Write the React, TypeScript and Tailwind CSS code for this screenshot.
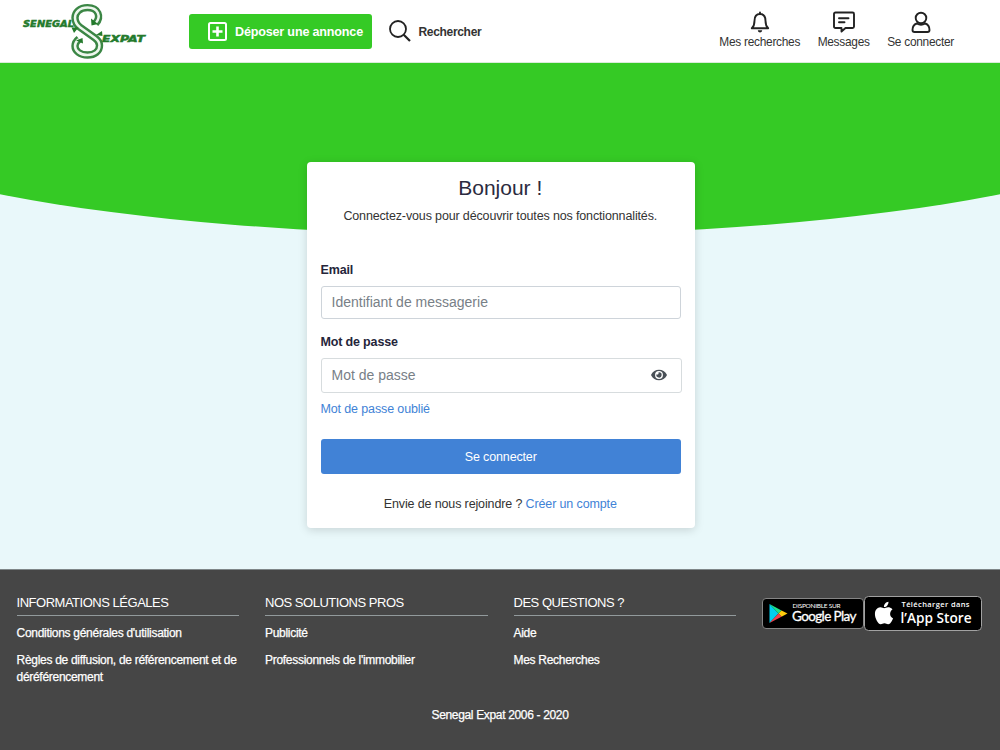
import React from "react";

function Logo() {
  const ribbon =
    "M95.500 23.500C101.500 17 98.500 7.600 87.500 7.600C79.500 7.600 75 12.500 75 17.800C75 22 77 25 80 27.300L95 38C98.500 40.500 99.500 42.500 99.500 45.500C99.500 51 95 55 87.500 55C80 55 75 51 75 46C75 43 76.500 41 79 39";
  return (
    <svg className="block h-[58px] w-[130px]" viewBox="20 2 130 58" fill="none">
      <path d={ribbon} stroke="#3b8645" strokeWidth="7.400" strokeLinejoin="round" />
      <path d={ribbon} stroke="#eef7ee" strokeWidth="2.500" strokeLinejoin="round" />
      <path d="M91 18.500L91.500 25.500L98 24ZM83 43.500L82.500 38L76 40.500ZM71.500 27.500L78.500 27.500L74 33ZM96 35L102 31L102.500 36Z" fill="#247a2c" />
      <text x="23" y="27.300" textLength="51" lengthAdjust="spacingAndGlyphs" fontFamily="DejaVu Sans" fontWeight="700" fontStyle="italic" fontSize="9.500" fill="#247a2c" stroke="#247a2c" strokeWidth=".5">SENEGAL</text>
      <text x="102" y="42" textLength="43" lengthAdjust="spacingAndGlyphs" fontFamily="DejaVu Sans" fontWeight="700" fontStyle="italic" fontSize="9.500" fill="#247a2c" stroke="#247a2c" strokeWidth=".5">EXPAT</text>
    </svg>
  );
}

function NavItem({ label, children }: { label: string; children: React.ReactNode }) {
  return (
    <a className="flex flex-col items-center whitespace-nowrap leading-[14px] text-[#333]">
      <svg viewBox="0 0 22 22" className="mb-[2px] h-[22px] w-[22px]" fill="none" stroke="#222" strokeWidth="1.900" strokeLinecap="round" strokeLinejoin="round">
        {children}
      </svg>
      <span className="text-[11.900px] tracking-[-0.270px]">{label}</span>
    </a>
  );
}

function FooterColumn({ title, links }: { title: string; links: string[] }) {
  return (
    <div className="w-[222.500px] shrink-0">
      <h3 className="border-b border-[#929a9c] pb-[4px] text-[13px] leading-[17px] tracking-[-0.480px] whitespace-nowrap">{title}</h3>
      <ul className="mt-[9px] flex flex-col gap-[10px] text-[12px] leading-[17px] tracking-[-0.290px] [-webkit-text-stroke:0.25px_white]">
        {links.map((l) => (
          <li key={l}>{l}</li>
        ))}
      </ul>
    </div>
  );
}

function GooglePlay() {
  return (
    <svg className="h-[31px] w-[102px]" viewBox="0 0 102 31">
      <rect x=".5" y=".5" width="101" height="30" rx="3.500" fill="#000" stroke="#858585" />
      <path d="M7.500 6L16.500 15.500L7.500 25Z" fill="#00cff0" />
      <path d="M7.500 6L19.500 12.500L16.500 15.500Z" fill="#1be08a" />
      <path d="M19.500 12.500L25.500 15.500L19.500 18.700L16.500 15.500Z" fill="#ffcb0c" />
      <path d="M7.500 25L16.500 15.500L19.500 18.700Z" fill="#f33f4b" />
      <text x="30.500" y="10" textLength="48" fontFamily="Lato" fontSize="6.500" fill="#fff">DISPONIBLE SUR</text>
      <text x="30" y="22.700" textLength="64.500" fontFamily="Lato" fontSize="13.500" fill="#fff" stroke="#fff" strokeWidth=".3">Google Play</text>
    </svg>
  );
}

function AppStore() {
  return (
    <svg className="h-[35px] w-[118px]" viewBox="0 0 118 35">
      <rect x=".5" y=".5" width="117" height="34" rx="4" fill="#000" stroke="#a2a2a2" />
      <path
        fill="#fff"
        d="M18.710 19.500c-.83 1.240-1.710 2.450-3.050 2.470-1.340.03-1.770-.79-3.290-.79-1.530 0-2 .77-3.270.82-1.310.05-2.300-1.320-3.140-2.530C4.250 17 2.940 12.450 4.700 9.390c.87-1.520 2.430-2.480 4.120-2.510 1.280-.02 2.500.87 3.290.87.780 0 2.260-1.070 3.810-.91.650.03 2.470.26 3.640 1.980-.09.060-2.170 1.280-2.150 3.810.03 3.020 2.650 4.030 2.680 4.040-.03.070-.42 1.440-1.380 2.830M13 3.500c.73-.83 1.940-1.460 2.940-1.500.13 1.170-.34 2.350-1.040 3.190-.69.850-1.830 1.510-2.950 1.420-.15-1.150.41-2.350 1.050-3.110z"
        transform="translate(6.600 3.600) scale(1.120)"
      />
      <text x="37.500" y="11" textLength="68" fontFamily="Open Sans" fontWeight="600" fontSize="7.500" fill="#fff">Télécharger dans</text>
      <text x="36.500" y="27.200" textLength="71" lengthAdjust="spacingAndGlyphs" fontFamily="Open Sans" fontWeight="600" fontSize="15" fill="#fff">l’App Store</text>
    </svg>
  );
}

export default function App() {
  return (
    <div className="flex h-[750px] w-full flex-col overflow-hidden bg-[#e9f8fa] font-['Liberation_Sans',Arial,sans-serif] text-[#333]">
      <header className="flex h-[63px] shrink-0 items-start border-b border-[#d9ecd9] bg-white pl-[20px] pr-[46px]">
        <div className="mt-[2px] w-[169px]">
          <Logo />
        </div>
        <button className="mt-[14px] flex h-[35px] w-[182.500px] items-center rounded-[3px] bg-[#35ca25] pl-[19px] text-[12.600px] tracking-[-0.190px] font-bold text-white">
          <svg viewBox="0 0 19 19" className="mr-[8px] h-[19px] w-[19px] shrink-0" fill="none" stroke="#fff" strokeWidth="2">
            <rect x="1" y="1" width="17" height="17" rx="1.500" />
            <path d="M9.500 4.500V14.500M4.500 9.500H14.500" strokeWidth="2.600" />
          </svg>
          <span className="whitespace-nowrap pt-[1px]">Déposer une annonce</span>
        </button>
        <a className="ml-[17px] mt-[19px] flex h-[24px] items-center text-[12px] tracking-[-0.320px] font-bold">
          <svg viewBox="0 0 22 22" className="mr-[8px] h-[22px] w-[22px]" fill="none" stroke="#222" strokeWidth="1.800">
            <circle cx="9" cy="9" r="8" />
            <path d="M14.700 14.700L21 21" strokeWidth="2.200" />
          </svg>
          <span className="mt-[1px]">Rechercher</span>
        </a>
        <nav className="ml-auto mt-[11px] flex gap-[17.500px]">
          <NavItem label="Mes recherches">
            <path d="M11 1.500V3M2.800 17.300H19.200C17.300 15.600 16.500 14 16.500 9.800C16.500 5.500 14.500 3 11 3C7.500 3 5.500 5.500 5.500 9.800C5.500 14 4.700 15.600 2.800 17.300Z" />
            <path d="M8.800 19.300H13.200C13 20.900 12 21.500 11 21.500C10 21.500 9 20.900 8.800 19.300Z" fill="#222" stroke="none" />
          </NavItem>
          <NavItem label="Messages">
            <path d="M2.500 1.500H19.500Q21 1.500 21 3V15.500Q21 17 19.500 17H12.500L8.500 20.500V17H2.500Q1 17 1 15.500V3Q1 1.500 2.500 1.500ZM6 7.300H15.500M6 11.300H11.500" />
          </NavItem>
          <NavItem label="Se connecter">
            <circle cx="11" cy="7" r="5.300" />
            <path d="M6.800 12.500C3.800 13.500 2.500 16 2.500 19Q2.500 21 4.500 21H17.500Q19.500 21 19.500 19C19.500 16 18.200 13.500 15.200 12.500Q11 15 6.800 12.500Z" />
          </NavItem>
        </nav>
      </header>

      <main className="relative flex h-[506px] shrink-0 justify-center overflow-hidden pl-[2px]">
        <div className="absolute -left-[20%] top-0 h-[172.300px] w-[140%] bg-[#35ca25] [border-radius:0_0_700px_700px/0_0_136px_136px]" />
        <section className="relative mt-[99px] flex h-[366px] w-[388px] flex-col rounded-[4px] bg-white pl-[13.500px] pr-[14px] shadow-[0_2px_10px_rgba(0,0,0,0.15)]">
          <h1 className="mt-[13px] pr-[1px] text-center text-[21px] leading-[26px] text-[#2b2b40]">Bonjour !</h1>
          <p className="mt-[7px] pr-[1px] text-center text-[12.500px] leading-[16px] tracking-[-0.140px] whitespace-nowrap">Connectez-vous pour découvrir toutes nos fonctionnalités.</p>
          <label className="mt-[38px] text-[12.500px] leading-[16px] tracking-[-0.160px] font-bold text-[#25253a]">Email</label>
          <input className="mt-[8px] h-[33px] w-[360px] shrink-0 rounded-[3px] border border-[#ced4da] px-[10px] pb-[2px] text-[14px] placeholder:text-[#788087]" placeholder="Identifiant de messagerie" />
          <label className="mt-[15px] text-[12.500px] leading-[16px] tracking-[-0.160px] font-bold text-[#25253a]">Mot de passe</label>
          <div className="mt-[8px] flex h-[35px] w-[361px] shrink-0 items-center rounded-[3px] border border-[#d7dcde] pl-[10px] pr-[14px]">
            <input className="min-w-0 flex-1 text-[14px] placeholder:text-[#788087]" placeholder="Mot de passe" />
            <svg viewBox="0 0 576 512" className="mb-[1px] h-[14px] w-[16px]" fill="#495057">
              <path d="M572.520 241.400C518.290 135.590 410.930 64 288 64S57.680 135.640 3.480 241.410a32.350 32.350 0 0 0 0 29.190C57.710 376.410 165.070 448 288 448s230.320-71.640 284.520-177.410a32.350 32.350 0 0 0 0-29.190zM288 400a144 144 0 1 1 144-144 143.930 143.930 0 0 1-144 144zm0-240a95.310 95.310 0 0 0-25.310 3.790 47.850 47.850 0 0 1-66.900 66.900A95.780 95.780 0 1 0 288 160z" />
            </svg>
          </div>
          <a className="mt-[8px] text-[12.500px] leading-[16px] tracking-[-0.130px] text-[#4182d6]">Mot de passe oublié</a>
          <button className="mt-[22px] h-[35px] shrink-0 rounded-[3px] bg-[#4182d6] pt-[1px] text-[12.500px] tracking-[-0.150px] text-white">Se connecter</button>
          <p className="mt-[22px] pr-[1px] text-center text-[12.500px] leading-[16px] tracking-[-0.130px]">
            Envie de nous rejoindre ? <a className="text-[#4182d6]">Créer un compte</a>
          </p>
        </section>
      </main>

      <footer className="flex flex-1 flex-col border-t border-[#7f8788] bg-[#464646] text-white">
        <div className="flex h-[137px] gap-[26px] pl-[16.500px] pt-[24px]">
          <FooterColumn title="INFORMATIONS LÉGALES" links={["Conditions générales d'utilisation", "Règles de diffusion, de référencement et de déréférencement"]} />
          <FooterColumn title="NOS SOLUTIONS PROS" links={["Publicité", "Professionnels de l'immobilier"]} />
          <FooterColumn title="DES QUESTIONS ?" links={["Aide", "Mes Recherches"]} />
          <div className="mt-[2px] flex h-[35px] items-center">
            <GooglePlay />
            <AppStore />
          </div>
        </div>
        <p className="text-center text-[12px] leading-[16px] tracking-[-0.340px] [-webkit-text-stroke:0.25px_white]">Senegal Expat 2006 - 2020</p>
      </footer>
    </div>
  );
}
